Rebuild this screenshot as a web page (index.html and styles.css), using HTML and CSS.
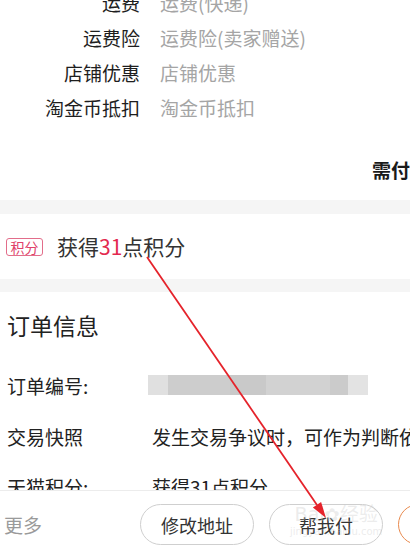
FILE: index.html
```html
<!DOCTYPE html>
<html lang="zh-CN">
<head>
<meta charset="utf-8">
<title>订单详情</title>
<link rel="stylesheet" href="styles.css">
</head>
<body>
<div class="page">
  <section class="fee-list">
    <div class="fee-row"><span class="fee-label">运费</span><span class="fee-value">运费(快递)</span></div>
    <div class="fee-row"><span class="fee-label">运费险</span><span class="fee-value">运费险(卖家赠送)</span></div>
    <div class="fee-row"><span class="fee-label">店铺优惠</span><span class="fee-value">店铺优惠</span></div>
    <div class="fee-row"><span class="fee-label">淘金币抵扣</span><span class="fee-value">淘金币抵扣</span></div>
    <div class="pay-row">需付款：¥ 0.00</div>
  </section>
  <div class="gap"></div>
  <section class="points">
    <span class="badge">积分</span>
    <span class="points-text">获得<em>31</em>点积分</span>
  </section>
  <div class="gap gap-2"></div>
  <section class="info">
    <h2 class="info-title">订单信息</h2>
    <div class="info-row"><span class="info-label">订单编号:</span><span class="blur-bar"></span></div>
    <div class="info-row"><span class="info-label">交易快照</span><span class="info-value">发生交易争议时，可作为判断依据</span></div>
    <div class="info-row"><span class="info-label">天猫积分:</span><span class="info-value">获得31点积分</span></div>
  </section>
</div>
<footer class="bottom-bar">
  <span class="more">更多</span>
  <button class="pill">修改地址</button>
  <button class="pill">帮我付</button>
  <button class="pill pill-orange">确认收货</button>
  <div class="watermark"><span class="wm-main">Bai<span class="wm-paw">✿</span>经验</span><span class="wm-sub">jingyan.baidu.com</span></div>
</footer>
<svg class="arrow" width="410" height="558" viewBox="0 0 410 558">
  <line x1="147" y1="257" x2="317" y2="505" stroke="#e5232b" stroke-width="1.8"/>
  <polygon points="326,518 312.9,507.6 321.1,502" fill="#e5232b"/>
</svg>
</body>
</html>
```
FILE: styles.css
```css
html, body {
  margin: 0;
  padding: 0;
  width: 410px;
  height: 558px;
  overflow: hidden;
  background: #fff;
  font-family: "Noto Sans CJK SC", "Noto Sans", sans-serif;
}
.page {
  width: 410px;
}
.fee-list {
  margin-top: -15px;
  padding-bottom: 13px;
}
.fee-row {
  display: flex;
  align-items: center;
  height: 35px;
  font-size: 19px;
  line-height: 1;
}
.fee-label {
  width: 140px;
  text-align: right;
  color: #1e1e1e;
}
.fee-value {
  margin-left: 20px;
  color: #a5a5a5;
}
.pay-row {
  margin-top: 27px;
  height: 35px;
  display: flex;
  align-items: center;
  padding-left: 372px;
  font-size: 19px;
  font-weight: bold;
  color: #1a1a1a;
  white-space: nowrap;
  line-height: 1;
}
.gap {
  height: 14px;
  background: #f5f5f5;
}
.gap-2 {
  height: 13px;
}
.points {
  height: 65px;
  display: flex;
  align-items: center;
  padding-left: 6px;
}
.badge {
  box-sizing: border-box;
  width: 37px;
  height: 18px;
  border: 1px solid #e26d8a;
  border-radius: 3px;
  color: #e0416a;
  font-size: 14px;
  line-height: 16px;
  text-align: center;
}
.points-text {
  margin-left: 14px;
  font-size: 21px;
  color: #333;
  line-height: 1;
}
.points-text em {
  font-style: normal;
  color: #e3294f;
}
.info {
  padding-left: 7px;
}
.info-title {
  margin: 0;
  height: 67px;
  display: flex;
  align-items: center;
  font-size: 23px;
  font-weight: normal;
  color: #222;
  line-height: 1;
}
.info-row {
  display: flex;
  align-items: center;
  height: 50px;
  font-size: 19px;
  line-height: 1;
  color: #222;
  white-space: nowrap;
}
.info-row:first-of-type {
  height: 52px;
}
.info-label {
  width: 145px;
  flex: none;
}
.info-value {
  color: #222;
}
.blur-bar {
  margin-left: -4px;
  width: 220px;
  height: 20px;
  background: linear-gradient(to right,
    #e0e0e0 0, #e0e0e0 20px,
    #cdcdcd 20px, #cdcdcd 82px,
    #c9c9c9 82px, #c9c9c9 118px,
    #d2d2d2 118px, #d2d2d2 182px,
    #cbcbcb 182px, #cbcbcb 200px,
    #e3e3e3 200px, #e3e3e3 220px);
}
.bottom-bar {
  position: fixed;
  left: 0;
  bottom: 0;
  width: 410px;
  height: 68px;
  box-sizing: border-box;
  background: #fff;
  border-top: 1px solid #ececec;
  display: flex;
  align-items: center;
  white-space: nowrap;
  overflow: hidden;
}
.more {
  flex: none;
  width: 136px;
  padding-left: 4px;
  font-size: 19px;
  color: #9a9a9a;
  line-height: 1;
}
.pill {
  flex: none;
  box-sizing: border-box;
  width: 114px;
  height: 41px;
  margin-right: 15px;
  border: 1px solid #cfcfcf;
  border-radius: 21px;
  background: #fff;
  font-family: inherit;
  font-size: 18px;
  color: #333;
  padding: 0;
  line-height: 1;
}
.pill-orange {
  border-color: #e98a4e;
  color: #e98a4e;
}
.watermark {
  position: absolute;
  left: 290px;
  top: 12px;
  display: flex;
  flex-direction: column;
  align-items: center;
  color: rgba(200, 200, 200, 0.35);
  pointer-events: none;
}
.wm-main {
  font-family: "DejaVu Sans", sans-serif;
  font-size: 19px;
  line-height: 22px;
}
.wm-paw {
  font-size: 18px;
}
.wm-sub {
  font-family: "DejaVu Sans", sans-serif;
  font-size: 10px;
  line-height: 12px;
}
.arrow {
  position: fixed;
  left: 0;
  top: 0;
  pointer-events: none;
}
```
